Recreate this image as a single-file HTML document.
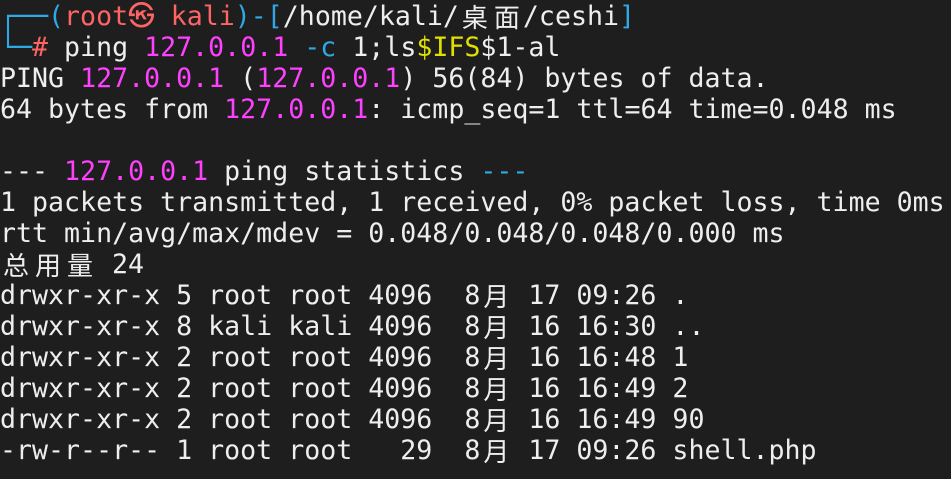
<!DOCTYPE html>
<html><head><meta charset="utf-8"><style>
html,body{margin:0;padding:0;background:#1e1e1e;width:951px;height:479px;overflow:hidden}
.t{position:absolute;left:0;top:1px;font-family:"DejaVu Sans Mono","Liberation Mono","Noto Sans CJK SC",monospace;font-size:26.6px;color:#eeeeee}
.t div{height:31px;line-height:31px;overflow:visible;white-space:pre}
.b{color:#2fa8e6}.r{color:#ff6464}.m{color:#ff40ff}.y{color:#e0e000}.c{color:#2fa8e6}
.k{display:inline-block;width:32px;height:31px;line-height:31px;vertical-align:top;font-family:"Noto Sans CJK SC",sans-serif;font-size:26px;text-align:center}
</style></head><body><div class="t"><div><span class="b">┌──(</span><span class="r">root㉿ kali</span><span class="b">)-[</span>/home/kali/<span class="k">桌</span><span class="k">面</span>/ceshi<span class="b">]</span></div><div><span class="b">└─</span><span class="r">#</span> ping <span class="m">127.0.0.1</span> <span class="c">-c</span> 1;ls<span class="y">$IFS</span>$1-al</div><div>PING <span class="m">127.0.0.1</span> (<span class="m">127.0.0.1</span>) 56(84) bytes of data.</div><div>64 bytes from <span class="m">127.0.0.1</span>: icmp_seq=1 ttl=64 time=0.048 ms</div><div> </div><div>--- <span class="m">127.0.0.1</span> ping statistics <span class="c">---</span></div><div>1 packets transmitted, 1 received, 0% packet loss, time 0ms</div><div>rtt min/avg/max/mdev = 0.048/0.048/0.048/0.000 ms</div><div><span class="k">总</span><span class="k">用</span><span class="k">量</span> 24</div><div>drwxr-xr-x 5 root root 4096  8<span class="k">月</span> 17 09:26 .</div><div>drwxr-xr-x 8 kali kali 4096  8<span class="k">月</span> 16 16:30 ..</div><div>drwxr-xr-x 2 root root 4096  8<span class="k">月</span> 16 16:48 1</div><div>drwxr-xr-x 2 root root 4096  8<span class="k">月</span> 16 16:49 2</div><div>drwxr-xr-x 2 root root 4096  8<span class="k">月</span> 16 16:49 90</div><div>-rw-r--r-- 1 root root   29  8<span class="k">月</span> 17 09:26 shell.php</div></div></body></html>
